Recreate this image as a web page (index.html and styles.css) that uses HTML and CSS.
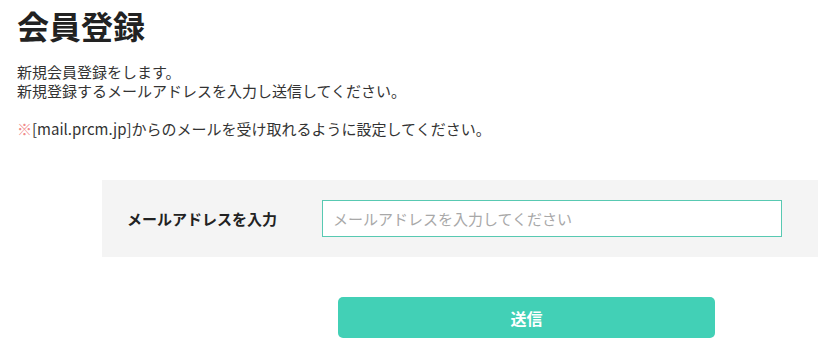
FILE: index.html
```html
<!DOCTYPE html>
<html lang="ja">
<head>
    <meta charset="UTF-8">
    <meta name="viewport" content="width=device-width, initial-scale=1.0">
    <title>会員登録</title>
    <link rel="stylesheet" href="styles.css">
</head>
<body>
    <div class="page">
        <h1 class="page-title">会員登録</h1>
        <p class="lead">新規会員登録をします。<br>新規登録するメールアドレスを入力し送信してください。</p>
        <p class="notice"><span class="mark">※</span>[mail.prcm.jp]からのメールを受け取れるように設定してください。</p>
    </div>

    <form class="entry-form" onsubmit="return false;">
        <div class="form-row">
            <label for="mail" class="form-label">メールアドレスを入力</label>
            <input id="mail" class="form-input" type="email" placeholder="メールアドレスを入力してください" autocomplete="off">
        </div>
        <button type="submit" class="submit-button">送信</button>
    </form>
</body>
</html>
```

FILE: styles.css
```css
body {
    margin: 0;
    padding: 0;
    background-color: #fff;
    color: #333;
    font-family: "Noto Sans CJK JP", "Noto Sans", sans-serif;
    font-size: 15px;
}
.page {
    padding: 0 17px;
}
.page-title {
    margin: 0;
    padding-top: 3px;
    font-size: 32px;
    font-weight: bold;
    line-height: 44px;
    color: #222;
}
.lead {
    margin: 15px 0 0;
    line-height: 19px;
}
.notice {
    margin: 19px 0 0;
    line-height: 19px;
}
.notice .mark {
    color: #f08a8a;
}
.entry-form {
    margin-top: 42px;
}
.form-row {
    display: flex;
    align-items: center;
    margin-left: 102px;
    padding: 20px 36px 20px 25px;
    background-color: #f4f4f4;
}
.form-label {
    width: 195px;
    font-weight: bold;
    color: #222;
}
.form-input {
    width: 460px;
    height: 37px;
    box-sizing: border-box;
    padding: 0 10px;
    border: 1px solid #58c9b2;
    background-color: #fff;
    font-family: inherit;
    font-size: 15px;
    color: #333;
    outline: none;
}
.form-input::placeholder {
    color: #a8a8a8;
}
.submit-button {
    display: block;
    width: 377px;
    height: 41px;
    margin: 40px 0 0 338px;
    border: none;
    border-radius: 5px;
    background-color: #42d0b6;
    color: #fff;
    font-family: inherit;
    font-size: 16px;
    font-weight: bold;
    cursor: pointer;
}
```
